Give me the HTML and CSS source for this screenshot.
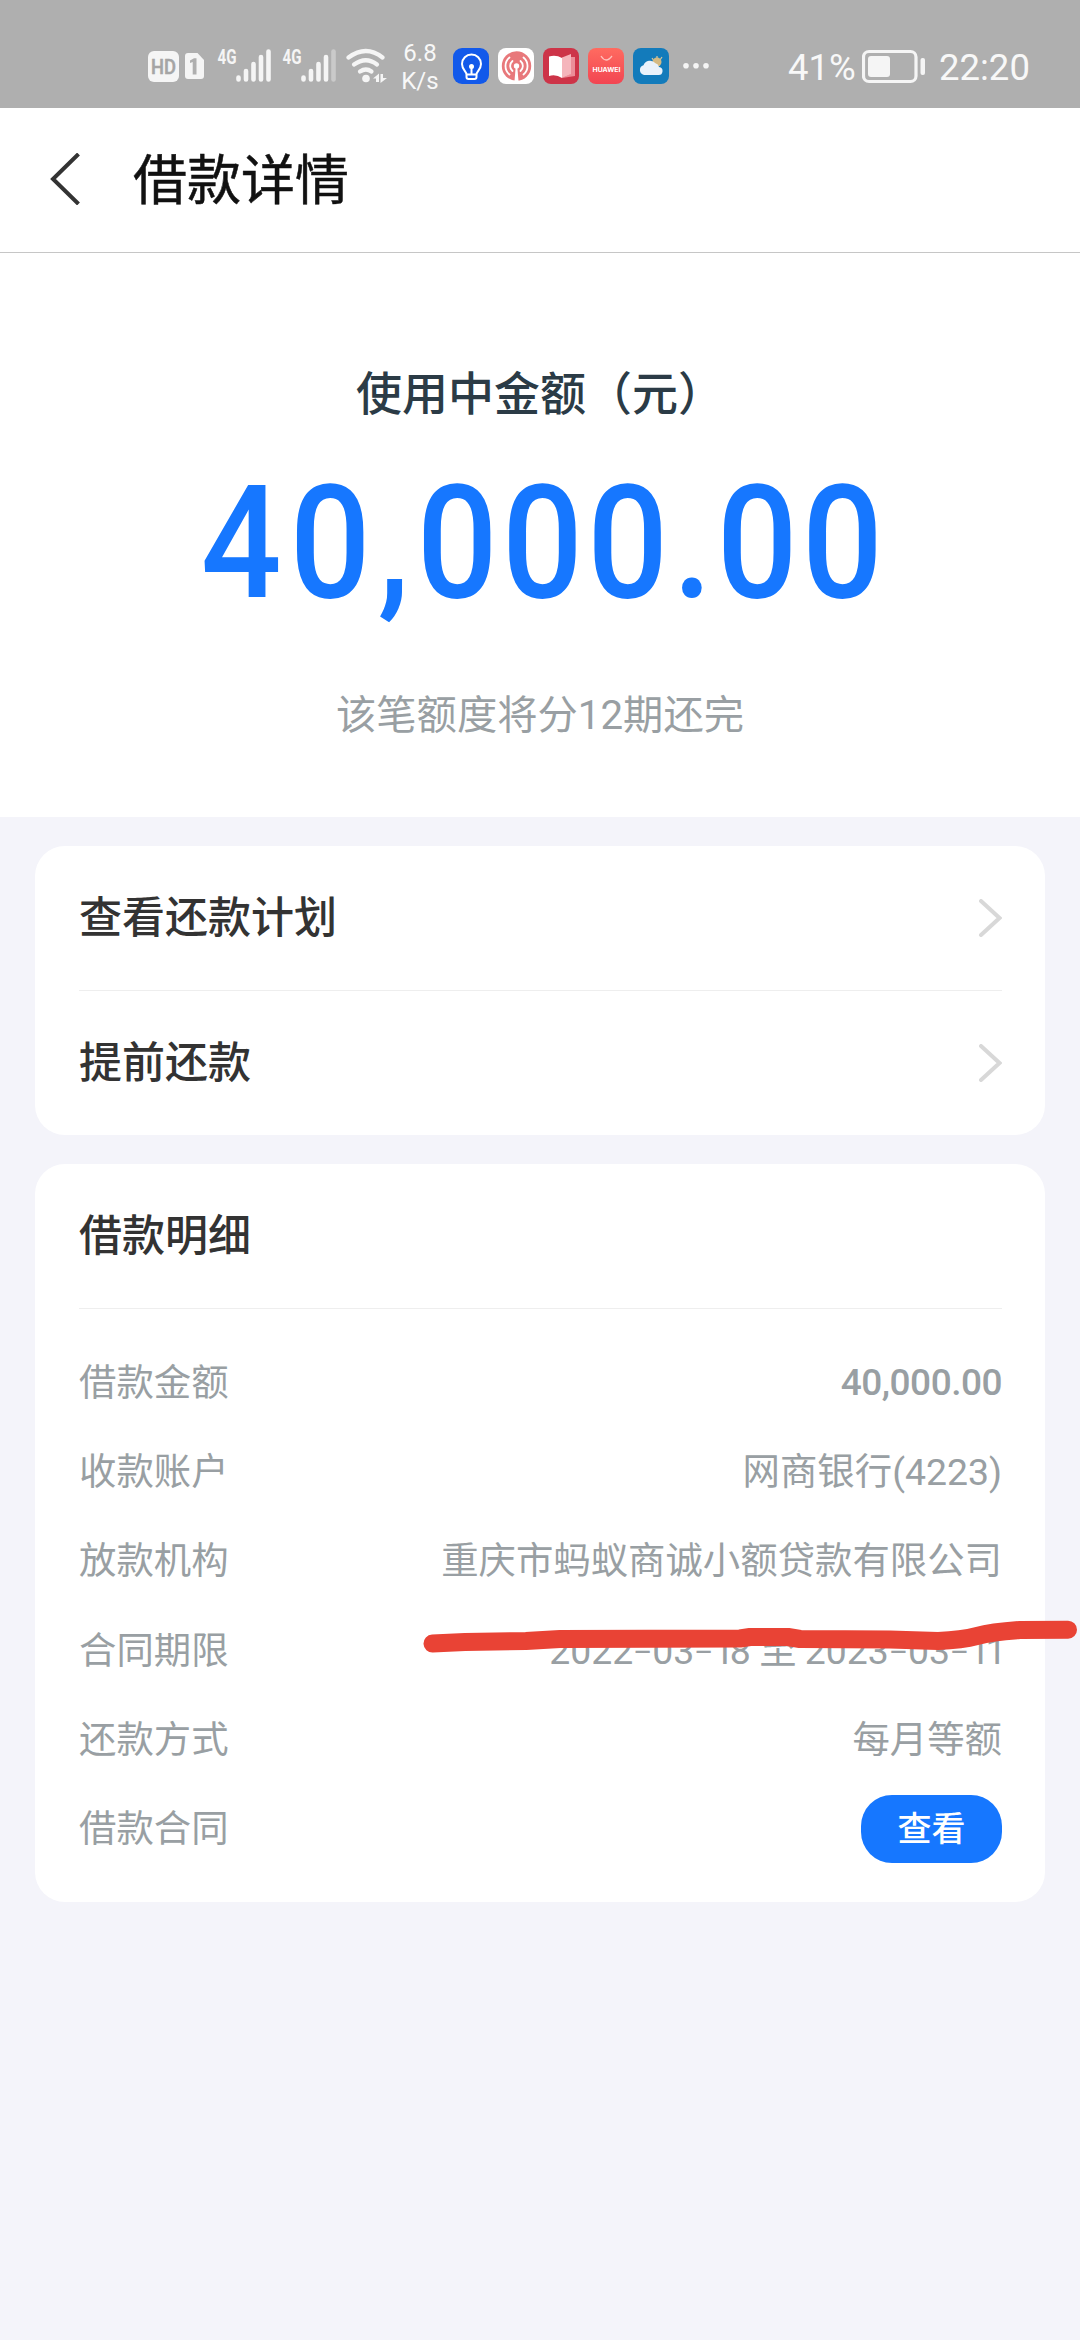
FILE: index.html
```html
<!DOCTYPE html>
<html lang="zh-CN">
<head>
<meta charset="utf-8">
<title>借款详情</title>
<link rel="stylesheet" href="styles.css">
</head>
<body>
<header class="status">
  <svg class="hd" width="57" height="36" viewBox="148 48 57 36">
    <rect x="148" y="51" width="31" height="31" rx="6" fill="#f5f5f5"/>
    <text x="163.500" y="74" text-anchor="middle" class="hd-text" textLength="25" lengthAdjust="spacingAndGlyphs">HD</text>
    <path d="M188 53h9.500L204 60v16a3 3 0 0 1-3 3h-13a3 3 0 0 1-3-3V56a3 3 0 0 1 3-3z" fill="#f5f5f5"/>
    <path d="M190 60.500l4-2.200h2.500V74.500h-3.800V62l-2.700 1z" fill="#afafaf"/>
  </svg>
  <svg class="signal" width="54" height="42" viewBox="217 42 54 42">
    <text x="217.500" y="63.500" class="net" textLength="19" lengthAdjust="spacingAndGlyphs">4G</text>
    <g stroke="#f5f5f5" stroke-width="4.600" stroke-linecap="round"><path d="M238.500 77.500v2M246 71v8.500M253.500 64v15.500M261 57v22.500M268.500 51.500v28"/></g>
  </svg>
  <svg class="signal signal2" width="54" height="42" viewBox="217 42 54 42">
    <text x="217.500" y="63.500" class="net" textLength="19" lengthAdjust="spacingAndGlyphs">4G</text>
    <g stroke="#f5f5f5" stroke-width="4.600" stroke-linecap="round"><path d="M238.500 77.500v2M246 71v8.500M253.500 64v15.500M261 57v22.500"/><path d="M268.500 51.500v28" stroke="#cacaca"/></g>
  </svg>
  <svg class="wifi" width="42" height="36" viewBox="346 48 42 36">
    <g fill="none" stroke="#f5f5f5" stroke-width="4.200" stroke-linecap="round"><path d="M348.500 57.500Q366 44.500 382.500 57.500"/><path d="M354 64.500Q366 56 377 64.500"/><path d="M360 71.500Q366 67.500 371.500 71.500"/></g>
    <circle cx="366" cy="78.500" r="3.800" fill="#f5f5f5"/>
    <path d="M373 78.500l6-5V82h-3v-3.500zM380.500 74h2.500v4h4l-6.500 5z" fill="#f5f5f5"/>
  </svg>
  <div class="speed"><span>6.8</span><span>K/s</span></div>
  <div class="apps">
    <svg width="36" height="36" viewBox="0 0 36 36"><rect width="36" height="36" rx="9" fill="#1259ea"/><g fill="none" stroke="#fff" stroke-width="2" stroke-linecap="round" stroke-linejoin="round"><path d="M13.500 26.500c0-3-4.500-5-4.500-10.500a9.500 9.500 0 0 1 19 0c0 5.500-4.500 7.500-4.500 10.500zM13.500 26.500v2.500q0 2 2 2h6q2 0 2-2v-2.500M18.500 19v7"/></g><circle cx="18.500" cy="18.500" r="2.500" fill="#fff"/></svg>
    <svg width="36" height="36" viewBox="0 0 36 36"><rect width="36" height="36" rx="8" fill="#fff"/><circle cx="18.500" cy="18" r="14.700" fill="#e8787b"/><g fill="none" stroke="#fff" stroke-width="1.800" stroke-linecap="round"><path d="M14.500 13a6.500 6.500 0 0 0 0 10M22.500 13a6.500 6.500 0 0 1 0 10M11.500 9.500a11 11 0 0 0 0 17M25.500 9.500a11 11 0 0 1 0 17"/></g><circle cx="18.500" cy="18" r="2.700" fill="#fff"/><path d="M17.700 19h1.600l1.200 14h-4z" fill="#fff"/></svg>
    <svg width="36" height="36" viewBox="0 0 36 36"><rect width="36" height="36" rx="8" fill="#cd3448"/><path d="M27 9h5v19l-13 2 8-4z" fill="#ec8d98"/><path d="M19 9.500l9-3.500v20l-9 4z" fill="#f5b5bc"/><path d="M6 8.500q7-2 13 1.500v20q-6-4-13-2z" fill="#fff"/></svg>
    <svg width="36" height="36" viewBox="0 0 36 36"><defs><linearGradient id="store" x2="0" y2="1"><stop stop-color="#ff6b60"/><stop offset="1" stop-color="#f24552"/></linearGradient></defs><rect width="36" height="36" rx="8" fill="url(#store)"/><path d="M13 8q5 8 11 0" fill="none" stroke="#ffc2bd" stroke-width="1.300"/><text x="18.500" y="23.500" text-anchor="middle" class="brand" textLength="28" lengthAdjust="spacingAndGlyphs">HUAWEI</text></svg>
    <svg width="36" height="36" viewBox="0 0 36 36"><rect width="36" height="36" rx="8" fill="#137bbb"/><path d="M24 8v3M29 9l-2 3M19 10l2 3" stroke="#d9c7a0" stroke-width="1.200"/><circle cx="24" cy="14" r="4.500" fill="#d5ba83"/><path d="M11 27a5 5 0 0 1-.5-9.700 7 7 0 0 1 12-2 5 5 0 0 1 3.500 3.700 4 4 0 0 1-1 8z" fill="#eaf2fb"/></svg>
  </div>
  <svg class="more" width="26" height="36" viewBox="0 0 26 36" fill="#f5f5f5"><circle cx="3" cy="17.700" r="2.800"/><circle cx="13" cy="17.700" r="2.800"/><circle cx="23" cy="17.700" r="2.800"/></svg>
  <span class="percent">41%</span>
  <svg class="battery" width="64" height="36" viewBox="863 48 64 36"><rect x="864.500" y="51.500" width="52.500" height="30" rx="5.500" fill="none" stroke="#f5f5f5" stroke-width="3.200"/><rect x="869" y="56" width="22" height="21" rx="3" fill="#f5f5f5"/><rect x="921.500" y="58" width="4.500" height="17" rx="2" fill="#f5f5f5"/></svg>
  <span class="clock">22:20</span>
</header>

<nav class="nav">
  <svg width="32" height="52" viewBox="0 0 32 52"><path d="M30.500 1L5 26L30.500 51" fill="none" stroke="#333" stroke-width="4"/></svg>
  <h1 class="title">借款详情</h1>
</nav>

<section class="hero">
  <div class="hero-label">使用中金额（元）</div>
  <div class="amount"><span class="lead">4</span>0<span class="comma">,</span>000.00</div>
  <div class="hero-note">该笔额度将分12期还完</div>
</section>

<main class="content">
  <section class="card">
    <a class="link">查看还款计划<svg class="chevron" width="24" height="38" viewBox="0 0 24 38"><path d="M3 2L21.500 19L3 36"/></svg></a>
    <a class="link">提前还款<svg class="chevron" width="24" height="38" viewBox="0 0 24 38"><path d="M3 2L21.500 19L3 36"/></svg></a>
  </section>
  <section class="card">
    <h2 class="link">借款明细</h2>
    <dl class="details">
      <div class="row"><dt>借款金额</dt><dd class="strong">40,000.00</dd></div>
      <div class="row"><dt>收款账户</dt><dd>网商银行(4223)</dd></div>
      <div class="row"><dt>放款机构</dt><dd>重庆市蚂蚁商诚小额贷款有限公司</dd></div>
      <div class="row"><dt>合同期限</dt><dd class="term">2022<i class="dash">–</i>03<i class="dash">–</i><i class="one">1</i>8 至 2023<i class="dash">–</i>03<i class="dash">–</i><i class="one">11</i></dd></div>
      <div class="row"><dt>还款方式</dt><dd>每月等额</dd></div>
      <div class="row"><dt>借款合同</dt><dd><button class="view">查看</button></dd></div>
    </dl>
    <svg class="marker" width="660" height="40" viewBox="420 1615 660 40"><path d="M432.500 1643.500L465 1642L526 1641L560 1639L740 1638.500L750 1637L788 1637L800 1639L890 1639.500L938 1641Q962 1640 977 1636T1020 1630L1068 1629.700"/></svg>
  </section>
</main>
</body>
</html>
```

FILE: styles.css
```css
* { box-sizing: border-box; margin: 0; padding: 0; }
body {
  width: 1080px;
  min-height: 2340px;
  background: #f4f4fa;
  font-family: Roboto, "Noto Sans CJK SC", sans-serif;
  color: #333;
}
svg { display: block; flex: none; }
i { font-style: normal; }

.status {
  height: 108px;
  padding: 48px 0 0 148px;
  display: flex;
  align-items: flex-start;
  background: #afafaf;
  color: #f8f8f8;
}
.hd-text { font: 500 19.500px Roboto, sans-serif; fill: #a5a5a5; stroke: #a5a5a5; stroke-width: .5; }
.net { font: 700 20px Roboto, sans-serif; fill: #f5f5f5; }
.brand { font: 700 6.500px Inter, sans-serif; fill: #fff; }
.signal { margin: -6px 0 0 12px; }
.signal2 { margin-left: 11px; }
.wifi { margin-left: 10px; }
.speed {
  width: 38px;
  margin: -9px 0 0 13px;
  display: flex;
  flex-direction: column;
  align-items: center;
  font-size: 24px;
  line-height: 28px;
}
.apps { display: flex; gap: 9px; margin-left: 14px; }
.more { margin-left: 14px; }
.percent, .clock { font-size: 36.500px; line-height: 40px; white-space: nowrap; }
.percent { width: 68px; margin-left: 79px; }
.battery { margin-left: 6px; }
.clock { margin-left: 13px; }

.nav {
  height: 145px;
  padding: 0 0 2px 48px;
  display: flex;
  align-items: center;
  gap: 53px;
  background: #fff;
  border-bottom: 1px solid #c6c6c6;
}
.title {
  padding-top: 5px;
  font-size: 54px;
  line-height: 80px;
  font-weight: 400;
  color: #111;
  -webkit-text-stroke: .5px #111;
}

.hero {
  height: 564px;
  padding-top: 106px;
  background: #fff;
  text-align: center;
}
.hero-label { height: 70px; line-height: 70px; font-size: 46px; font-weight: 500; color: #2b3b46; }
.amount {
  margin-top: 19px;
  padding-left: 9px;
  height: 190px;
  line-height: 190px;
  font-size: 158px;
  font-weight: 500;
  letter-spacing: 5px;
  color: #1677ff;
  transform: scaleX(.9);
}
.lead { padding-right: 4px; }
.comma { padding: 0 3px; }
.hero-note { margin-top: 48px; line-height: 60px; font-size: 40.300px; color: #999fa3; }

.content { padding: 29px 35px; display: flex; flex-direction: column; gap: 29px; }
.card { position: relative; background: #fff; border-radius: 30px; padding: 0 43px 0 44px; }
.link {
  height: 145px;
  display: flex;
  align-items: center;
  justify-content: space-between;
  font-size: 43px;
  line-height: 64px;
  font-weight: 500;
  color: #333;
  border-bottom: 1px solid #eee;
}
a.link:last-child { border-bottom: 0; height: 144px; }
.chevron { fill: none; stroke: #d8d8d8; stroke-width: 4; stroke-linecap: round; }

.details { padding: 29px 0 28px; }
.row {
  height: 89.300px;
  display: flex;
  align-items: center;
  justify-content: space-between;
  font-size: 37.400px;
  line-height: 56px;
  color: #999fa3;
  white-space: nowrap;
}
.strong { font-weight: 500; font-size: 37px; letter-spacing: -.5px; }
.term { word-spacing: -1px; }
.dash { font-size: 29px; vertical-align: 2px; line-height: 1; }
.one { letter-spacing: -4.500px; }
.view {
  display: block;
  width: 141px;
  height: 68px;
  border: 0;
  border-radius: 31px;
  background: #1677ff;
  color: #fff;
  font: 500 34px/68px Roboto, "Noto Sans CJK SC", sans-serif;
}
.marker { position: absolute; left: 385px; top: 451px; }
.marker path { fill: none; stroke: #e94335; stroke-width: 18; stroke-linecap: round; stroke-linejoin: round; }
```
